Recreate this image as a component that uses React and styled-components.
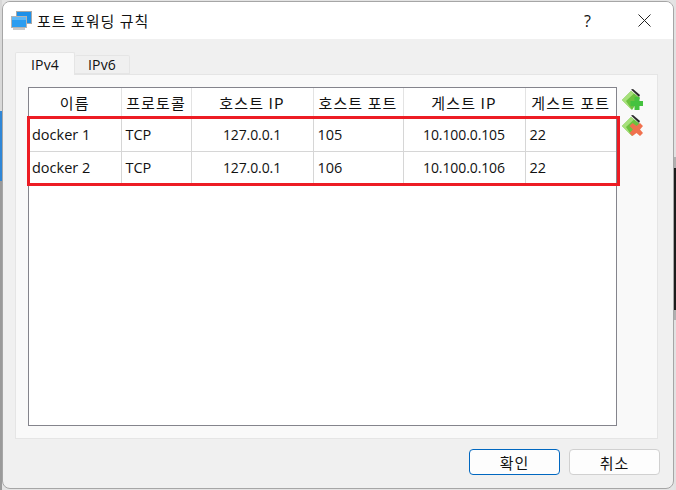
import styled, { createGlobalStyle } from "styled-components";

const GlobalStyle = createGlobalStyle`
  html, body {
    margin: 0;
    padding: 0;
    width: 676px;
    height: 490px;
    overflow: hidden;
    background: #e4e4e4;
  }
  * {
    box-sizing: border-box;
  }
`;

// what shows of the desktop round the dialog: a strip on each side
const Desktop = styled.div`
  width: 676px;
  height: 490px;
  padding: 1px 2px 1px 2px;
  background:
    linear-gradient(#d8d8d8 0 111px, #2f86d6 111px 181px, #9a9a9a 181px) left / 2px 100% no-repeat,
    linear-gradient(#e2e2e2 0 157px, #b0b0b0 157px 168px, #1c1c1c 168px 310px, #b0b0b0 310px 320px, #e2e2e2 320px) right / 2px 100% no-repeat,
    #e4e4e4;
  font-family: "Open Sans", "Noto Sans CJK KR", sans-serif;
  color: #111;
`;

const Window = styled.div`
  height: 488px;
  display: flex;
  flex-direction: column;
  background: #f0f0f0;
  border: 1px solid #a6a6a6;
  border-radius: 8px;
  overflow: hidden;
`;

const TitleBar = styled.div`
  height: 37px;
  flex: none;
  display: flex;
  align-items: center;
  padding-left: 8px;
  background: #fff;
`;

const Title = styled.span`
  margin-left: 5px;
  font-size: 15px;
  letter-spacing: 1px;
  font-family: "Noto Sans CJK KR", sans-serif;
`;

const TitleButtons = styled.div`
  margin-left: auto;
  display: flex;
  align-items: center;
`;

const TitleButton = styled.div`
  width: 57px;
  height: 37px;
  display: flex;
  align-items: center;
  justify-content: center;
  font-size: 16px;
`;

const Body = styled.div`
  flex: 1;
  display: flex;
  flex-direction: column;
  padding: 13px 13px 0 12px;
`;

const Tabs = styled.div`
  display: flex;
  align-items: flex-end;
  height: 22px;
  position: relative;
  z-index: 1;
`;

const Tab = styled.div`
  height: ${(p) => (p.$active ? "23px" : "19px")};
  margin-bottom: ${(p) => (p.$active ? "-1px" : "0")};
  width: ${(p) => (p.$active ? "60px" : "55px")};
  display: flex;
  align-items: center;
  justify-content: center;
  font-size: 14px;
  letter-spacing: 0.2px;
  background: ${(p) => (p.$active ? "#f9f9f9" : "#f0f0f0")};
  border: 1px solid #e5e5e5;
  border-bottom: ${(p) => (p.$active ? "none" : "1px solid #e5e5e5")};
  border-left: ${(p) => (p.$active ? "1px solid #e5e5e5" : "none")};
  border-radius: 2px 2px 0 0;
`;

const Pane = styled.div`
  width: 643px;
  height: 365px;
  padding: 12px 0 12px 12px;
  display: flex;
  gap: 5px;
  background: #f9f9f9;
  border: 1px solid #e5e5e5;
`;

const TableBox = styled.div`
  position: relative;
  width: 589px;
  height: 339px;
  flex: none;
  background: #fff;
  border: 1px solid #84848c;
`;

const Grid = styled.table`
  width: 587px;
  table-layout: fixed;
  border-collapse: collapse;
`;

const HeadCell = styled.th`
  height: 30px;
  padding: 0;
  font-weight: 400;
  font-size: 15px;
  letter-spacing: 1.1px;
  text-align: center;
  white-space: nowrap;
  font-family: "Noto Sans CJK KR", sans-serif;
  border-right: 1px solid #e3e3e3;
  border-bottom: 1px solid #d6d6d6;
  &:last-child {
    border-right: none;
  }
`;

const Cell = styled.td`
  height: 33px;
  padding: 0 0 0 ${(p) => (p.$center ? "0" : "4px")};
  font-size: ${(p) => (p.$center ? "14px" : "14.5px")};
  letter-spacing: ${(p) => (p.$center ? "-0.1px" : "0")};
  text-align: ${(p) => (p.$center ? "center" : "left")};
  white-space: nowrap;
  border-right: 1px solid #d6d6d6;
  border-bottom: 1px solid #d6d6d6;
  &:first-child {
    padding-left: 3px;
  }
  &:last-child {
    border-right: none;
  }
`;

const Highlight = styled.div`
  position: absolute;
  left: -2px;
  top: 28px;
  width: 593px;
  height: 70px;
  border: 3px solid #ed1c24;
  pointer-events: none;
`;

const SideTools = styled.div`
  display: flex;
  flex-direction: column;
  gap: 5px;
  padding-top: 2px;
`;

const Footer = styled.div`
  flex: 1;
  display: flex;
  justify-content: flex-end;
  gap: 9px;
  padding: 10px 0 0 0;
`;

const DialogButton = styled.button`
  width: 91px;
  height: 26px;
  padding: 0;
  font-family: "Noto Sans CJK KR", sans-serif;
  font-size: 15px;
  letter-spacing: 1px;
  color: #111;
  background: #fdfdfd;
  border: 1px solid ${(p) => (p.$primary ? "#0067c0" : "#d0d0d0")};
  border-radius: 4px;
`;

const MonitorIcon = () => (
  <svg width="21" height="20" viewBox="0 0 21 20">
    <rect x="5" y="0" width="16" height="13" fill="#a9a9a9" />
    <rect x="6" y="1" width="14" height="11" fill="#1e90e8" />
    <rect x="0" y="5" width="16" height="12" fill="#b4b4b4" />
    <rect x="1" y="6" width="14" height="10" fill="#2c9df0" />
    <rect x="1" y="6" width="14" height="3" fill="#5db8f7" />
    <rect x="2" y="17" width="12" height="2" fill="#c9c9c9" />
  </svg>
);

const CloseIcon = () => (
  <svg width="13" height="13" viewBox="0 0 13 13">
    <path d="M0.5 0.5 L12.5 12.5 M12.5 0.5 L0.5 12.5" stroke="#222" strokeWidth="1" fill="none" />
  </svg>
);

const RuleIcon = ({ remove }) => (
  <svg width="21" height="21" viewBox="0 0 21 21">
    <path d="M0 11 L9 2 L18 9 L10 21 Z" fill="#6cc23f" />
    <path d="M0 11 L9 2 L12 4.5 L4 12 L10 21 Z" fill="#a6e07a" />
    <path d="M9 0.5 L11 0 L18 6 L17 8 Z" fill="#2a2a2a" />
    {remove ? (
      <path
        d="M7.5 11 L10.5 8 L14.5 11 L18 8 L21 11 L18 14.5 L21 18 L18 21 L14.5 18 L10.5 21 L7.5 18 L11 14.5 Z"
        fill="#f0714e"
      />
    ) : (
      <path d="M12.5 8 H17.5 V12 H21 V17 H17.5 V21 H12.5 V17 H8.5 V12 H12.5 Z" fill="#45c23f" />
    )}
  </svg>
);

const columns = [
  { name: "이름", width: 92 },
  { name: "프로토콜", width: 70 },
  { name: "호스트 IP", width: 122 },
  { name: "호스트 포트", width: 90 },
  { name: "게스트 IP", width: 122 },
  { name: "게스트 포트", width: 91 },
];

const rules = [
  ["docker 1", "TCP", "127.0.0.1", "105", "10.100.0.105", "22"],
  ["docker 2", "TCP", "127.0.0.1", "106", "10.100.0.106", "22"],
];

export default function App() {
  return (
    <Desktop>
      <GlobalStyle />
      <Window>
        <TitleBar>
          <MonitorIcon />
          <Title>포트 포워딩 규칙</Title>
          <TitleButtons>
            <TitleButton>?</TitleButton>
            <TitleButton>
              <CloseIcon />
            </TitleButton>
          </TitleButtons>
        </TitleBar>
        <Body>
          <Tabs>
            <Tab $active>IPv4</Tab>
            <Tab>IPv6</Tab>
          </Tabs>
          <Pane>
            <TableBox>
              <Grid>
                <colgroup>
                  {columns.map((c) => (
                    <col key={c.name} width={c.width} />
                  ))}
                </colgroup>
                <thead>
                  <tr>
                    {columns.map((c) => (
                      <HeadCell key={c.name}>{c.name}</HeadCell>
                    ))}
                  </tr>
                </thead>
                <tbody>
                  {rules.map((row) => (
                    <tr key={row[0]}>
                      {row.map((value, i) => (
                        <Cell key={i} $center={i === 2 || i === 4}>
                          {value}
                        </Cell>
                      ))}
                    </tr>
                  ))}
                </tbody>
              </Grid>
              <Highlight />
            </TableBox>
            <SideTools>
              <RuleIcon />
              <RuleIcon remove />
            </SideTools>
          </Pane>
          <Footer>
            <DialogButton $primary>확인</DialogButton>
            <DialogButton>취소</DialogButton>
          </Footer>
        </Body>
      </Window>
    </Desktop>
  );
}
